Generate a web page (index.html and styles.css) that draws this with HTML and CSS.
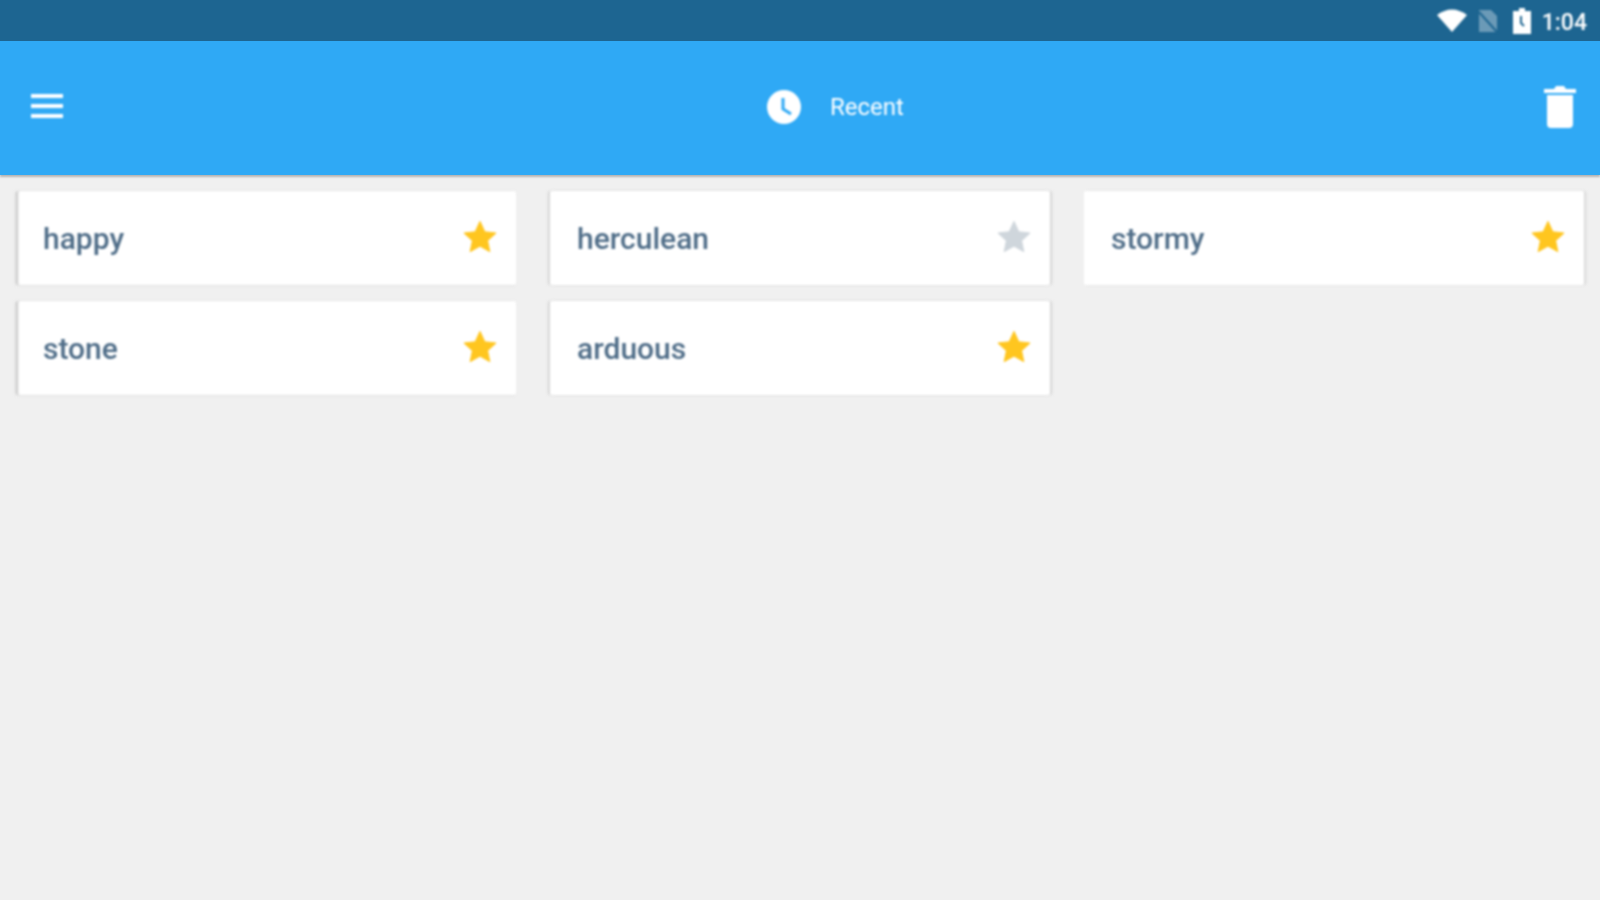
FILE: index.html
```html
<!DOCTYPE html>
<html lang="en">
<head>
  <meta charset="UTF-8" />
  <title>Recent</title>
  <link rel="stylesheet" href="styles.css">
</head>
<body>
  <svg class="defs" width="0" height="0">
    <symbol id="star" viewBox="0 0 32 32">
      <path d="M16 1.5l4.4 9.6 10.4 1.2-7.7 7.1 2.1 10.3-9.2-5.2-9.2 5.2 2.1-10.3-7.7-7.1 10.4-1.2z" stroke-linejoin="round" stroke-width="1" stroke="currentColor" fill="currentColor"/>
    </symbol>
  </svg>

  <div class="status-bar">
    <svg class="wifi" width="30" height="24" viewBox="0 0 30 24"><path d="M0 6Q15-5 30 6L15 23z" fill="#fff"/></svg>
    <svg class="sim" width="20" height="24" viewBox="0 0 20 24">
      <path d="M1 1h12l6 6v16H1z" fill="#fff" opacity=".35"/>
      <path d="M1 3l18 20" stroke="#1d6591" stroke-width="2"/>
    </svg>
    <svg class="battery" width="18" height="26" viewBox="0 0 18 26">
      <path d="M6 0h6v3h6v23H0V3h6z" fill="#fff"/>
      <path d="M8 8v7l3 3" fill="none" stroke="#1d6591" stroke-width="2"/>
    </svg>
    <span class="time">1:04</span>
  </div>

  <header class="app-bar">
    <svg class="menu" width="32" height="26" viewBox="0 0 32 26">
      <path d="M0 1h32v4H0zM0 11h32v4H0zM0 21h32v4H0z" fill="#fff"/>
    </svg>
    <div class="title">
      <svg width="34" height="34" viewBox="0 0 34 34">
        <circle cx="17" cy="17" r="17" fill="#fff"/>
        <path d="M16 8v11l8 5" fill="none" stroke="#2fa9f5" stroke-width="3"/>
      </svg>
      <span>Recent</span>
    </div>
    <svg class="trash" width="32" height="43" viewBox="0 0 32 43">
      <path d="M0 4h10l2-3h8l2 3h10v4H0zM3 10h26v29q0 4-4 4H7q-4 0-4-4z" fill="#fff"/>
    </svg>
  </header>

  <main class="words">
    <div class="card first"><span>happy</span><svg class="star on"><use href="#star"/></svg></div>
    <div class="card middle"><span>herculean</span><svg class="star"><use href="#star"/></svg></div>
    <div class="card last"><span>stormy</span><svg class="star on"><use href="#star"/></svg></div>
    <div class="card first"><span>stone</span><svg class="star on"><use href="#star"/></svg></div>
    <div class="card middle"><span>arduous</span><svg class="star on"><use href="#star"/></svg></div>
  </main>
</body>
</html>
```

FILE: styles.css
```css
body {
  margin: 0;
  height: 900px;
  overflow: hidden;
  background-color: #f0f0f0;
  font-family: Roboto, sans-serif;
}
.defs {
  display: block;
  height: 0;
}
/* the reference is an upscaled capture, so everything is a bit soft */
.status-bar > *, .app-bar > *, .card {
  filter: blur(0.8px);
}
.status-bar {
  display: flex;
  align-items: center;
  justify-content: flex-end;
  height: 41px;
  padding-right: 13px;
  background-color: #1d6591;
}
.wifi { margin-right: 11px; }
.sim { margin-right: 15px; }
.battery { margin-right: 11px; }
.time {
  margin-top: 3px;
  color: #fff;
  font-size: 23px;
  font-weight: 500;
}
.menu { margin-bottom: 2px; }
.trash { margin-bottom: 1px; }
.app-bar {
  display: flex;
  align-items: center;
  height: 132px;
  padding: 0 24px 2px 31px;
  background-color: #2fa9f5;
  box-shadow: 0 2px 2px rgba(0, 0, 0, 0.25);
}
.title {
  flex: 1;
  display: flex;
  align-items: center;
  gap: 29px;
  padding-left: 704px;
  color: #fff;
  font-size: 24px;
}
.words {
  display: grid;
  grid-template-columns: repeat(3, 500px);
  gap: 16px 34px;
  padding: 16px 16px 0;
}
.card {
  display: flex;
  align-items: center;
  justify-content: space-between;
  height: 94px;
  padding: 0 19px 0 27px;
  border-radius: 2px;
  background-color: #fff;
  color: #4f6d88;
  font-size: 30px;
  font-weight: 500;
}
.first { box-shadow: inset 3px 0 2px -1px #c8c8c8, -1px 0 2px #dcdcdc, 0 2px 2px -1px #e4e4e4; }
.middle { box-shadow: -2px 0 2px #d4d4d4, 2px 0 2px #d4d4d4; }
.last { box-shadow: 2px 0 2px #d8d8d8; }
.star {
  width: 34px;
  height: 34px;
  margin-bottom: 3px;
  color: #cfd6dc;
}
.star.on {
  color: #ffc61f;
}
```
